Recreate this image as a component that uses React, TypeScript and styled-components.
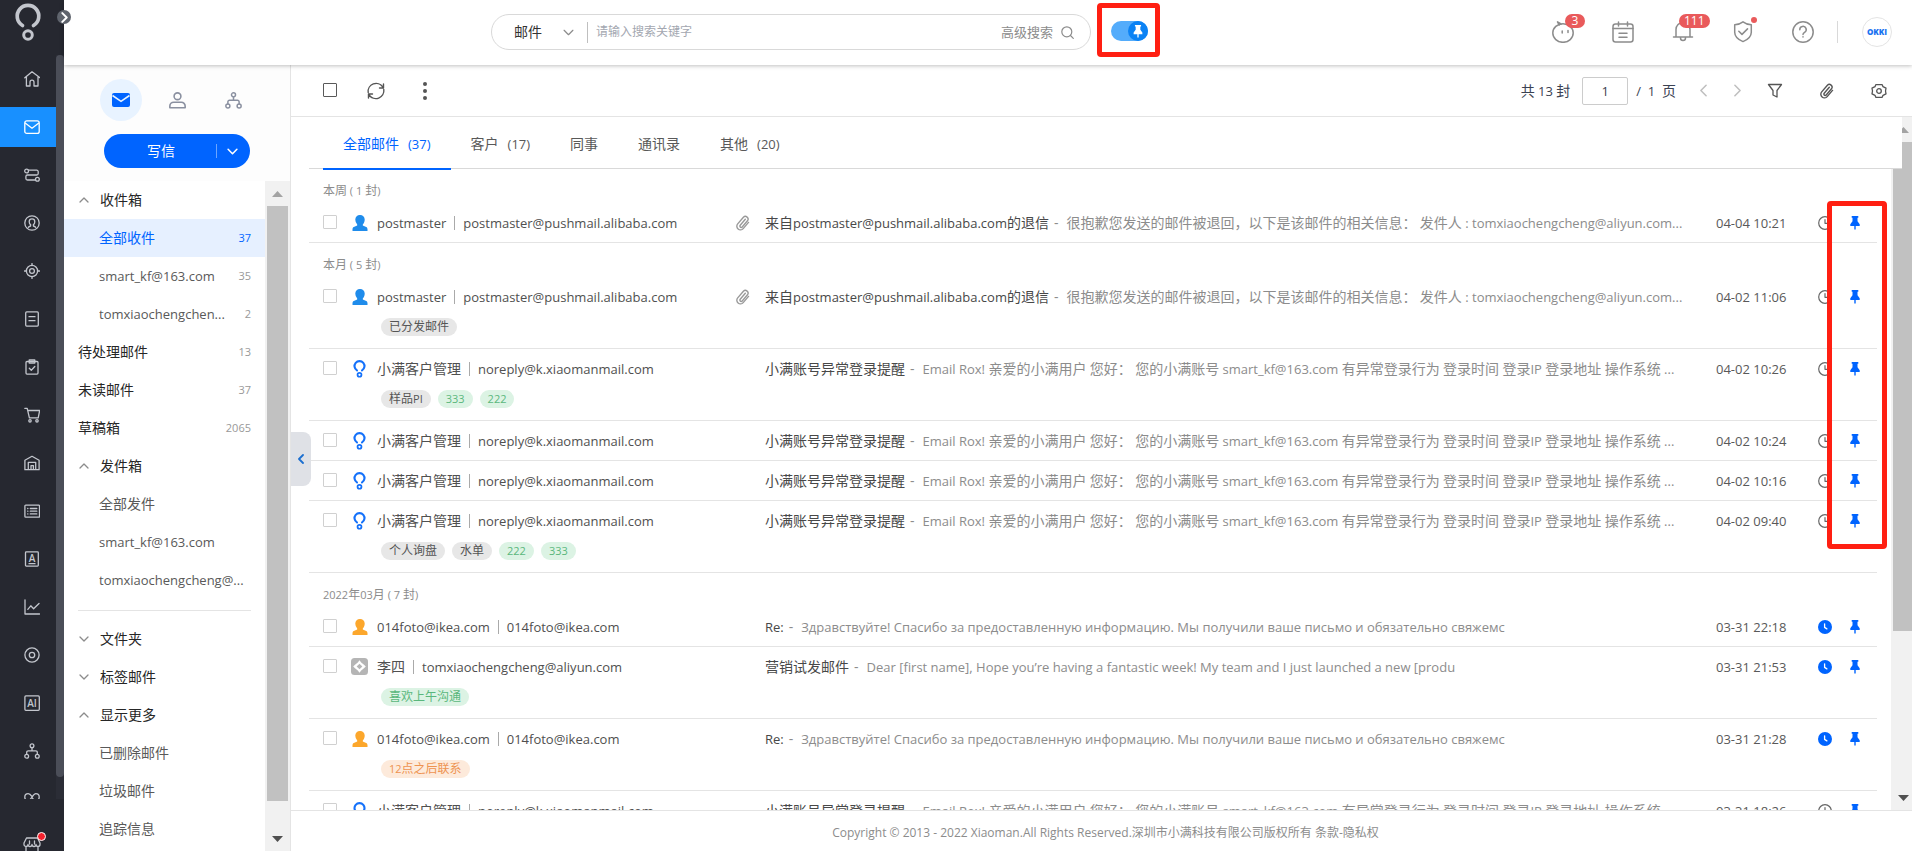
import React from "react";
import styled, { createGlobalStyle, css } from "styled-components";

const blue = "#0064ff";
const line = "#e4e4e4";

const GlobalStyle = createGlobalStyle`
  *, *::before, *::after { box-sizing: border-box; }
  body { margin: 0; background: #fff; }
  body, button, input, select {
    font-family: "Open Sans", "Noto Sans CJK SC", sans-serif;
    font-size: 14px;
    line-height: 20px;
    color: #505050;
  }
  button { padding: 0; border: 0; background: none; cursor: pointer; }
  ul { margin: 0; padding: 0; list-style: none; }
  a { color: inherit; text-decoration: none; }
  svg { display: block; flex: none; }
`;

/* ---------- text ---------- */

const Latin = styled.span<{ $size: number }>`
  font-size: ${(p) => p.$size}px;
`;

const CJK = /([\u2e80-\u9fff\uff00-\uffef]+)/;

/** Latin glyphs are set one pixel smaller than the Chinese ones beside them. */
function T({ children, size = 14 }: { children: string; size?: number }) {
  return (
    <>
      {children.split(CJK).map((part, i) =>
        i % 2 ? part : part && <Latin key={i} $size={size - 1}>{part}</Latin>
      )}
    </>
  );
}

/* ---------- icons ---------- */

type SvgProps = { w?: number; h?: number; box?: string; sw?: number; color?: string; children: React.ReactNode };

function Svg({ w = 16, h = w, box = "0 0 16 16", sw = 1.3, color = "currentColor", children }: SvgProps) {
  return (
    <svg width={w} height={h} viewBox={box} fill="none" stroke={color} strokeWidth={sw}
      strokeLinejoin="round" strokeLinecap="round" aria-hidden="true">
      {children}
    </svg>
  );
}

const BrandMark = ({ w, h, color, sw = 3.7 }: { w: number; h: number; color: string; sw?: number }) => (
  <Svg w={w} h={h} box="14 3 28 39" color={color} sw={sw}>
    <path d="M22.5 25.5A10.8 10.8 0 1 1 33.5 25.5" />
    <circle cx="28" cy="35" r="4.3" strokeWidth={sw * 0.8} />
  </Svg>
);

const Chevron = ({ dir, size = 10, sw = 1.3, color }: { dir: "up" | "down" | "left" | "right"; size?: number; sw?: number; color?: string }) => {
  const d = { up: "M1 7 5 3l4 4", down: "M1 3l4 4 4-4", left: "M7 1 3 5l4 4", right: "M3 1l4 4-4 4" }[dir];
  return <Svg w={size} box="0 0 10 10" sw={sw} color={color}><path d={d} /></Svg>;
};

const Pin = ({ w = 10, h = 14 }: { w?: number; h?: number }) => (
  <svg width={w} height={h} viewBox="0 0 10 14" fill="currentColor" aria-hidden="true">
    <path d="M1.7 0h6.6v1.7h-.8v3.5L9.7 8.200v1.700H5.700V13.500H4.300V9.900H.3V8.200L2.500 5.200V1.700h-.8z" />
  </svg>
);

const Clock = ({ filled }: { filled: boolean }) =>
  filled ? (
    <Svg w={14} box="0 0 14 14" color="#fff">
      <circle cx="7" cy="7" r="7" fill={blue} stroke="none" />
      <path d="M6.600 3.800v3.600l2.300 1.500" />
    </Svg>
  ) : (
    <Svg w={14} box="0 0 14 14" sw={1.2} color="#666">
      <circle cx="7" cy="7" r="6.300" />
      <path d="M7 3.500V7.300h3" />
    </Svg>
  );

const Clip = ({ size = 16, color = "#999" }: { size?: number; color?: string }) => (
  <Svg w={size} color={color} sw={1.4}>
    <path d="M10.300 4.300 5.200 10.300a1.300 1.300 0 0 0 2 1.700l5.300-6.200a2.700 2.700 0 0 0-4.100-3.500L2.700 8.900a3.600 3.600 0 0 0 5.500 4.700l5.300-6.200" />
  </Svg>
);

const Person = ({ color }: { color: string }) => (
  <svg width="16" height="16" viewBox="0 0 16 16" fill={color} aria-hidden="true">
    <path d="M8 0a4.600 4.600 0 0 1 4.700 4.700c0 1.900-.7 3.500-1.900 4.700v1l3.400 1.500c.8.400 1.200 1.200 1.300 2.200V16H.5v-1.900c.1-1 .5-1.800 1.300-2.200l3.400-1.500v-1A6.500 6.500 0 0 1 3.300 4.700 4.600 4.600 0 0 1 8 0z" />
  </svg>
);

const Lead = () => (
  <svg width="17" height="17" viewBox="0 0 17 17" aria-hidden="true">
    <rect width="17" height="17" rx="3.500" fill="#b5b5b5" />
    <path d="M8.500 2.200l1.700 2.300 2.500 1.900 2.100 2.100-2.100 2.100-2.500 1.900-1.700 2.300-1.700-2.300-2.500-1.900-2.100-2.100 2.100-2.100 2.500-1.900z" fill="#fff" />
    <path d="M8.500 5.700l2.800 2.800-2.800 2.800-2.800-2.800z" fill="#b5b5b5" />
  </svg>
);

const Mail = () => (
  <>
    <rect x=".8" y="1.800" width="14.400" height="12.600" rx="2" />
    <path d="M1.500 4.200 8 9.200l6.500-5" />
  </>
);

const Org = () => (
  <>
    <circle cx="8" cy="2.700" r="1.900" />
    <circle cx="2.700" cy="13.200" r="1.900" />
    <circle cx="13.300" cy="13.200" r="1.900" />
    <path d="M8 4.600v3.200M2.700 11.300V9.300a1.500 1.500 0 0 1 1.500-1.500h7.600a1.500 1.500 0 0 1 1.500 1.500v2" />
  </>
);

const GlyphText = styled.text`
  font: 600 10px "Open Sans", sans-serif;
  fill: currentColor;
  stroke: none;
`;

const navIcons: { label: string; icon: React.ReactNode; active?: boolean }[] = [
  { label: "首页", icon: <path d="M.8 6.800 8 .8l8 6M2.400 5.800v9.200h3.600v-3.800a2 2 0 0 1 4 0V15h4V5.800" /> },
  { label: "邮件", icon: <Mail />, active: true },
  { label: "流程", icon: <><circle cx="2.600" cy="4" r="1.900" /><circle cx="13.400" cy="12.200" r="1.900" /><path d="M4.400 3.200h8.300a1.500 1.500 0 0 1 1.500 1.500v1.800A1.500 1.500 0 0 1 12.700 8H3.400A1.500 1.500 0 0 0 1.900 9.500v2a1.500 1.500 0 0 0 1.500 1.500h8M5.500 8h5" /></> },
  { label: "客户", icon: <><circle cx="8" cy="8" r="7.200" /><path d="M4.300 12.400c.5-.9 1.300-1.200 2.300-1.400V9.600C5.700 9 5.200 8 5.200 6.700a2.800 2.800 0 0 1 5.600 0c0 1.300-.5 2.300-1.400 2.900V11c1 .2 1.800.5 2.300 1.400" /></> },
  { label: "线索", icon: <><circle cx="8" cy="8" r="5.600" /><circle cx="8" cy="8" r="2.400" /><path d="M8 .5v2M8 13.500v2M.5 8h2M13.500 8h2" /></> },
  { label: "文档", icon: <><rect x="1.700" y=".9" width="12.600" height="14.200" rx="1" /><path d="M5 5.700h6M5 9.700h6" /></> },
  { label: "任务", icon: <><rect x="2" y="2.500" width="12" height="12.600" rx="1" /><path d="M5.200 1h5.600v3H5.200zM5.300 9.200l2 2 3.500-3.700" /></> },
  { label: "订单", icon: <><path d="M.8 1.300h2.400l2.200 9.600h8.800l1.500-7.400H3.700" /><circle cx="6" cy="13.800" r="1.200" /><circle cx="13" cy="13.800" r="1.200" /></> },
  { label: "仓库", icon: <><path d="M.9 5.200 8 1.300l7.100 3.900v9.500H.9zM4.300 14.500V7.300h7.400v7.200M7 14.500v-3.800h2.400v3.800" /></> },
  { label: "列表", icon: <><rect x=".9" y="2.200" width="14.600" height="12" rx=".8" /><path d="M3.700 5.500h.2M3.700 8.200h.2M3.700 10.900h.2M6.300 5.500h6.500M6.300 8.200h6.500M6.300 10.900h6.500" /></> },
  { label: "翻译", icon: <><rect x="1.500" y=".9" width="12.800" height="14.200" rx=".8" /><GlyphText x="8" y="10.500" textAnchor="middle">A</GlyphText><path d="M5 12.700h6" /></> },
  { label: "报表", icon: <path d="M1 .8v14.200h14.600M3.800 10.300l3-3.500 2.800 3L15 4.500" /> },
  { label: "设置", icon: <><circle cx="8" cy="8" r="7.100" /><circle cx="8" cy="8" r="2.700" /></> },
  { label: "智能", icon: <><rect x=".9" y=".9" width="14.400" height="14.400" rx="1" /><GlyphText x="8" y="11.800" textAnchor="middle">AI</GlyphText></> },
  { label: "组织", icon: <Org /> },
  { label: "更多", icon: <path d="M8 5.500C6.500 3.500 5.500 2.700 4.200 2.700a3.400 3.400 0 0 0 0 6.800c3 0 4.600-6.800 7.600-6.800a3.400 3.400 0 0 1 0 6.800c-1.500 0-2.500-1-3.800-3" /> },
];

/* ---------- shell ---------- */

const Shell = styled.div`
  position: relative;
  display: flex;
  height: 100vh;
  overflow: hidden;
`;

const Rail = styled.aside`
  position: relative;
  display: flex;
  flex: none;
  flex-direction: column;
  width: 64px;
  background: #262830;
  color: #c3c6cd;
`;

const RailLogo = styled.a`
  display: block;
  height: 55px;
  padding: 3px 0 0 14px;
`;

const ExpandButton = styled.button`
  position: absolute;
  z-index: 5;
  top: 10px;
  left: 57px;
  display: grid;
  place-items: center;
  width: 14px;
  height: 14px;
  border-radius: 50%;
  background: #5f646d;
`;

const RailBody = styled.div`
  display: flex;
  flex: 1;
  min-height: 0;
`;

const RailNav = styled.nav`
  display: flex;
  flex: 1;
  flex-direction: column;
  gap: 8px;
  padding-top: 4px;
  overflow: hidden;
`;

const RailLink = styled.a<{ $active?: boolean }>`
  display: flex;
  flex: none;
  align-items: center;
  height: 40px;
  padding-left: 24px;
  background: ${(p) => (p.$active ? "#1890ff" : "none")};
  color: ${(p) => (p.$active ? "#fff" : "inherit")};
`;

const RailTrack = styled.div`
  width: 8px;
  background: #2b2d36;
`;

const RailThumb = styled.div`
  height: 97%;
  border-radius: 4px;
  background: #4b4e58;
`;

const RailStore = styled.a`
  position: relative;
  display: block;
  height: 52px;
  padding: 38px 0 0 23px;
  overflow: hidden;
`;

const StoreDot = styled.i`
  position: absolute;
  top: 33px;
  left: 37px;
  width: 9px;
  height: 9px;
  border: 1px solid #fff;
  border-radius: 50%;
  background: #f5222d;
`;

const Page = styled.div`
  display: flex;
  flex: 1;
  flex-direction: column;
  min-width: 0;
`;

/* ---------- header ---------- */

const Header = styled.header`
  position: relative;
  z-index: 2;
  display: flex;
  flex: none;
  align-items: center;
  height: 65px;
  padding: 0 20px 13px 427px;
  background: #fff;
  box-shadow: 0 1px 4px rgba(0, 0, 0, 0.25);
`;

const SearchBox = styled.form`
  display: flex;
  align-items: center;
  width: 600px;
  height: 36px;
  margin-top: 12px;
  padding: 0 16px 0 22px;
  border: 1px solid #d9d9d9;
  border-radius: 18px;
  color: #8c8c8c;
`;

const ScopeSelect = styled.select`
  width: 49px;
  border: 0;
  outline: 0;
  background: none;
  appearance: none;
  color: #333;
`;

const SearchDivider = styled.i`
  width: 1px;
  height: 21px;
  margin: 0 8px 0 13px;
  background: #bfbfbf;
`;

const SearchInput = styled.input`
  flex: 1;
  min-width: 0;
  padding: 0;
  border: 0;
  outline: 0;
  background: none;
  font-size: 12px;
  &::placeholder { color: #a3a7b0; }
`;

const AdvancedButton = styled.button`
  margin-right: 8px;
  color: #8c8c8c;
  font-size: 13px;
`;

const Highlight = styled.div`
  display: grid;
  place-items: center;
  width: 63px;
  height: 54px;
  margin: 8px 0 0 6px;
  padding: 2px 0 0 2px;
  border: 5px solid #ff1f12;
  border-radius: 4px;
`;

const PinSwitch = styled.label`
  position: relative;
  display: flex;
  justify-content: flex-end;
  width: 37px;
  height: 20px;
  border-radius: 10px;
  background: #54acfb;
`;

const HiddenCheck = styled.input`
  position: absolute;
  inset: 0;
  margin: 0;
  opacity: 0;
`;

const SwitchKnob = styled.span`
  display: grid;
  place-items: center;
  width: 20px;
  height: 20px;
  border-radius: 50%;
  background: #0b82f4;
  color: #fff;
`;

const HeaderTools = styled.div`
  display: flex;
  align-items: center;
  gap: 38px;
  margin: 12px 0 0 auto;
  color: #8c8c8c;
`;

const ToolButton = styled.button`
  position: relative;
  color: inherit;
`;

const Badge = styled.span`
  position: absolute;
  top: -7px;
  left: 13px;
  min-width: 20px;
  height: 14px;
  padding: 0 6px;
  border-radius: 7px;
  background: #e95a5b;
  color: #fff;
  font-size: 12px;
  line-height: 14px;
`;

const WideBadge = styled(Badge)`
  left: 7px;
  padding: 0 5px;
`;

const BadgeDot = styled.i`
  position: absolute;
  top: -4px;
  right: -3px;
  width: 6px;
  height: 6px;
  border-radius: 50%;
  background: #e95a5b;
`;

const Account = styled.div`
  display: flex;
  align-items: center;
  gap: 24px;
  margin: 12px 0 0 23px;
  &::before {
    content: "";
    width: 1px;
    height: 22px;
    background: #d9d9d9;
  }
`;

const Avatar = styled.button`
  width: 30px;
  height: 30px;
  border: 1px solid #e4e4e4;
  border-radius: 50%;
  color: #1a73f0;
  font-size: 8px;
  font-weight: 800;
  line-height: 28px;
`;

/* ---------- folders ---------- */

const Body = styled.div`
  display: flex;
  flex: 1;
  min-height: 0;
`;

const Side = styled.aside`
  display: flex;
  flex: none;
  flex-direction: column;
  width: 227px;
  border-right: 1px solid ${line};
`;

const SideTop = styled.div`
  flex: none;
  height: 116px;
  padding-top: 14px;
  background: #fdfdfd;
`;

const ModeBar = styled.div`
  display: flex;
  gap: 14px;
  padding-left: 36px;
`;

const ModeButton = styled.button<{ $active?: boolean }>`
  display: grid;
  place-items: center;
  width: 42px;
  height: 42px;
  border-radius: 50%;
  background: ${(p) => (p.$active ? "#e8f3ff" : "none")};
  color: #8a90a0;
`;

const Compose = styled.div`
  display: flex;
  align-items: center;
  width: 146px;
  height: 34px;
  margin: 13px 0 0 40px;
  border-radius: 17px;
  background: ${blue};
`;

const ComposeMain = styled.button`
  flex: 1;
  height: 34px;
  padding-left: 2px;
  color: #fff;
`;

const ComposeMore = styled.button`
  display: flex;
  align-items: center;
  width: 34px;
  height: 14px;
  padding-left: 10px;
  border-left: 1px solid #6ba5ff;
`;

const SideBody = styled.div`
  display: flex;
  flex: 1;
  min-height: 0;
`;

const Folders = styled.nav`
  flex: 1;
  min-width: 0;
  overflow: hidden;
`;

const Folder = styled.a<{ $level: "group" | "plain" | "child"; $active?: boolean }>`
  display: flex;
  align-items: center;
  height: 38px;
  padding: 0 14px;
  color: #595959;
  ${(p) => p.$level === "child" && css`padding-left: 35px;`}
  ${(p) => p.$level !== "child" && css`color: #262626;`}
  ${(p) => p.$active && css`background: #e6f0ff; color: ${blue};`}
`;

const FolderToggle = styled.span`
  width: 22px;
  padding-left: 1px;
  color: #8c8c8c;
`;

const FolderName = styled.span`
  flex: 1;
  overflow: hidden;
  text-overflow: ellipsis;
  white-space: nowrap;
`;

const FolderCount = styled.span<{ $active?: boolean }>`
  color: ${(p) => (p.$active ? blue : "#999")};
  font-size: 11px;
`;

const FolderRule = styled.hr`
  height: 1px;
  margin: 11px 14px 9px;
  border: 0;
  background: ${line};
`;

const Track = styled.div<{ $width: number }>`
  display: flex;
  flex: none;
  flex-direction: column;
  width: ${(p) => p.$width}px;
  background: #f1f1f1;
`;

const TrackArrow = styled.span`
  display: grid;
  flex: none;
  place-items: center;
  width: 25px;
  height: 25px;
`;

const TrackRun = styled.div`
  flex: 1;
  padding-left: 2px;
`;

const TrackThumb = styled.div<{ $share: number }>`
  width: 21px;
  max-width: 100%;
  height: ${(p) => p.$share}%;
  background: #c1c1c1;
`;

function ScrollTrack({ share, width }: { share: number; width: number }) {
  return (
    <Track $width={width} aria-hidden="true">
      <TrackArrow><svg width="11" height="6" viewBox="0 0 11 6"><path d="M0 6 5.500 0 11 6z" fill="#a3a3a3" /></svg></TrackArrow>
      <TrackRun><TrackThumb $share={share} /></TrackRun>
      <TrackArrow><svg width="11" height="6" viewBox="0 0 11 6"><path d="M0 0 5.500 6 11 0z" fill="#505050" /></svg></TrackArrow>
    </Track>
  );
}

/* ---------- mail area ---------- */

const Main = styled.main`
  position: relative;
  display: flex;
  flex: 1;
  flex-direction: column;
  min-width: 0;
`;

const CollapseHandle = styled.button`
  position: absolute;
  top: 367px;
  left: 0;
  display: grid;
  place-items: center;
  width: 20px;
  height: 54px;
  border-radius: 0 8px 8px 0;
  background: #dfe1e6;
`;

const Toolbar = styled.div`
  display: flex;
  flex: none;
  align-items: center;
  height: 52px;
  padding: 0 25px 0 32px;
  border-bottom: 1px solid ${line};
  color: #555;
`;

const Check = styled.input<{ $dark?: boolean }>`
  flex: none;
  width: 14px;
  height: 14px;
  margin: 0 0 2px;
  border: 1px solid ${(p) => (p.$dark ? "#595959" : "#d0d0d0")};
  border-radius: 1px;
  background: #fff;
  appearance: none;
`;

const BarActions = styled.div`
  display: flex;
  align-items: center;
  gap: 30px;
`;

const Pager = styled.div`
  display: flex;
  align-items: center;
  margin-left: auto;
  padding-right: 23px;
  color: #3b4252;
`;

const PageInput = styled.input`
  width: 46px;
  height: 28px;
  margin: 0 8px 0 12px;
  border: 1px solid #ccc;
  border-radius: 2px;
  font-size: 13px;
  text-align: center;
  color: #3b4252;
`;

const Step = styled.button`
  margin-left: 21px;
`;

const RightActions = styled.div`
  display: flex;
  align-items: center;
  gap: 36px;
`;

const Viewport = styled.div`
  position: relative;
  display: flex;
  flex: 1;
  min-height: 0;
`;

const Content = styled.div`
  flex: 1;
  min-width: 0;
  padding-left: 18px;
  overflow: hidden;
`;

const TabBar = styled.div`
  position: absolute;
  z-index: 1;
  top: 0;
  right: 10px;
  left: 0;
  padding-left: 18px;
  background: #fff;
`;

const TabStrip = styled.div`
  display: flex;
  height: 52px;
  padding-left: 14px;
  border-bottom: 1px solid #d9d9d9;
`;

const Tab = styled.button<{ $active?: boolean }>`
  display: flex;
  gap: 9px;
  align-items: center;
  height: 53px;
  padding: 2px 20px 0;
  border-bottom: 2px solid ${(p) => (p.$active ? blue : "transparent")};
  color: ${(p) => (p.$active ? blue : "#595959")};
`;

const Mails = styled.div`
  margin-right: 14px;
  padding-top: 52px;
`;

const GroupTitle = styled.h2`
  height: 34px;
  margin: 0;
  padding: 14px 14px 4px;
  color: #8c8c8c;
  font-size: 12px;
  font-weight: 400;
  line-height: 16px;
`;

const MailItem = styled.li`
  padding-left: 14px;
  border-bottom: 1px solid ${line};
`;

const MailLine = styled.div`
  display: flex;
  align-items: center;
  height: 39px;
`;

const Kind = styled.span`
  display: grid;
  place-items: center;
  width: 17px;
  margin: 0 9px 0 14px;
`;

const Sender = styled.span`
  display: flex;
  align-items: center;
  width: 358px;
  white-space: nowrap;
`;

const SenderRule = styled.i`
  width: 1px;
  height: 14px;
  margin: 0 8px;
  background: #aaa;
`;

const ClipSlot = styled.span`
  width: 30px;
`;

const Summary = styled.span`
  flex: 1;
  min-width: 0;
  padding-right: 8px;
  overflow: hidden;
  color: #8c8c8c;
  text-overflow: ellipsis;
  white-space: nowrap;
`;

const Subject = styled.a`
  color: #484848;
`;

const Dash = styled.span`
  margin: 0 8px 0 5px;
`;

const When = styled.time`
  width: 102px;
  color: #595959;
  font-size: 13px;
`;

const PinButton = styled.button`
  margin: 0 17px 0 18px;
  color: ${blue};
`;

const Tags = styled.div`
  display: flex;
  gap: 7px;
  height: 32px;
  padding: 2px 0 0 58px;
`;

const tones = {
  gray: css`background: #e7e7e7; color: #555;`,
  green: css`background: #dcf3e4; color: #5ab77c;`,
  orange: css`background: #fdeadb; color: #ee9350;`,
};

const Tag = styled.span<{ $tone: keyof typeof tones }>`
  height: 18px;
  padding: 0 8px;
  border-radius: 9px;
  font-size: 12px;
  line-height: 18px;
  ${(p) => tones[p.$tone]}
`;

const PinFrame = styled.div`
  position: absolute;
  z-index: 2;
  top: 84px;
  right: 25px;
  width: 60px;
  height: 348px;
  border: 5px solid #ff1f12;
  border-radius: 4px;
  pointer-events: none;
`;

const Footer = styled.footer`
  flex: none;
  height: 41px;
  padding: 12px 0 0 8px;
  border-top: 1px solid ${line};
  color: #8c8c8c;
  font-size: 12px;
  text-align: center;
`;

/* ---------- data ---------- */

type MailData = {
  kind: "blue" | "orange" | "brand" | "lead";
  name: string;
  address: string;
  clip?: boolean;
  subject: string;
  text: string;
  time: string;
  scheduled?: boolean;
  tags?: [string, keyof typeof tones][];
};

const bounce = {
  kind: "blue" as const,
  name: "postmaster",
  address: "postmaster@pushmail.alibaba.com",
  clip: true,
  subject: "来自postmaster@pushmail.alibaba.com的退信",
  text: "很抱歉您发送的邮件被退回，以下是该邮件的相关信息： 发件人 : tomxiaochengcheng@aliyun.com...",
};
const alertMail = {
  kind: "brand" as const,
  name: "小满客户管理",
  address: "noreply@k.xiaomanmail.com",
  subject: "小满账号异常登录提醒",
  text: "Email Rox! 亲爱的小满用户 您好： 您的小满账号 smart_kf@163.com 有异常登录行为 登录时间 登录IP 登录地址 操作系统 ...",
};
const ikea = {
  kind: "orange" as const,
  name: "014foto@ikea.com",
  address: "014foto@ikea.com",
  subject: "Re:",
  text: "Здравствуйте! Спасибо за предоставленную информацию. Мы получили ваше письмо и обязательно свяжемс",
  scheduled: true,
};

const groups: { title: string; mails: MailData[] }[] = [
  { title: "本周 ( 1 封)", mails: [{ ...bounce, time: "04-04 10:21" }] },
  {
    title: "本月 ( 5 封)",
    mails: [
      { ...bounce, time: "04-02 11:06", tags: [["已分发邮件", "gray"]] },
      { ...alertMail, time: "04-02 10:26", tags: [["样品PI", "gray"], ["333", "green"], ["222", "green"]] },
      { ...alertMail, time: "04-02 10:24" },
      { ...alertMail, time: "04-02 10:16" },
      { ...alertMail, time: "04-02 09:40", tags: [["个人询盘", "gray"], ["水单", "gray"], ["222", "green"], ["333", "green"]] },
    ],
  },
  {
    title: "2022年03月 ( 7 封)",
    mails: [
      { ...ikea, time: "03-31 22:18" },
      {
        kind: "lead", name: "李四", address: "tomxiaochengcheng@aliyun.com", subject: "营销试发邮件",
        text: "Dear [first name], Hope you’re having a fantastic week! My team and I just launched a new [produ",
        time: "03-31 21:53", scheduled: true, tags: [["喜欢上午沟通", "green"]],
      },
      { ...ikea, time: "03-31 21:28", tags: [["12点之后联系", "orange"]] },
      { ...alertMail, time: "03-31 18:26" },
    ],
  },
];

type FolderData = { name: string; level: "group" | "plain" | "child"; open?: boolean; count?: string; active?: boolean };

const folders: FolderData[] = [
  { name: "收件箱", level: "group", open: true },
  { name: "全部收件", level: "child", count: "37", active: true },
  { name: "smart_kf@163.com", level: "child", count: "35" },
  { name: "tomxiaochengchen...", level: "child", count: "2" },
  { name: "待处理邮件", level: "plain", count: "13" },
  { name: "未读邮件", level: "plain", count: "37" },
  { name: "草稿箱", level: "plain", count: "2065" },
  { name: "发件箱", level: "group", open: true },
  { name: "全部发件", level: "child" },
  { name: "smart_kf@163.com", level: "child" },
  { name: "tomxiaochengcheng@...", level: "child" },
];
const moreFolders: FolderData[] = [
  { name: "文件夹", level: "group" },
  { name: "标签邮件", level: "group" },
  { name: "显示更多", level: "group", open: true },
  { name: "已删除邮件", level: "child" },
  { name: "垃圾邮件", level: "child" },
  { name: "追踪信息", level: "child" },
];

const tabs: [string, string?][] = [["全部邮件", "(37)"], ["客户", "(17)"], ["同事"], ["通讯录"], ["其他", "(20)"]];

/* ---------- parts ---------- */

const FolderItem = ({ name, level, open, count, active }: FolderData) => (
  <Folder href="#" $level={level} $active={active}>
    {level === "group" && <FolderToggle><Chevron dir={open ? "up" : "down"} /></FolderToggle>}
    <FolderName><T>{name}</T></FolderName>
    {count && <FolderCount $active={active}>{count}</FolderCount>}
  </Folder>
);

const kindIcons = {
  blue: <Person color="#1f8ceb" />,
  orange: <Person color="#fca72c" />,
  brand: <BrandMark w={13} h={18} color="#1471fa" sw={4.6} />,
  lead: <Lead />,
};

const MailRow = ({ mail }: { mail: MailData }) => (
  <MailItem>
    <MailLine>
      <Check type="checkbox" aria-label={`选择 ${mail.subject}`} />
      <Kind>{kindIcons[mail.kind]}</Kind>
      <Sender>
        <span><T>{mail.name}</T></span>
        <SenderRule />
        <span><T>{mail.address}</T></span>
      </Sender>
      <ClipSlot>{mail.clip && <Clip />}</ClipSlot>
      <Summary>
        <Subject href="#"><T>{mail.subject}</T></Subject>
        <Dash>-</Dash>
        <T>{mail.text}</T>
      </Summary>
      <When>{mail.time}</When>
      <ToolButton type="button" aria-label="定时"><Clock filled={!!mail.scheduled} /></ToolButton>
      <PinButton type="button" aria-label="固定"><Pin /></PinButton>
    </MailLine>
    {mail.tags && (
      <Tags>
        {mail.tags.map(([name, tone]) => <Tag key={name} $tone={tone}><T size={12}>{name}</T></Tag>)}
      </Tags>
    )}
  </MailItem>
);

export default function App() {
  return (
    <Shell>
      <GlobalStyle />
      <Rail>
        <RailLogo href="#" aria-label="OKKI"><BrandMark w={28} h={39} color="#c3c6cd" /></RailLogo>
        <ExpandButton type="button" aria-label="展开"><Chevron dir="right" size={11} sw={1.8} color="#fff" /></ExpandButton>
        <RailBody>
          <RailNav>
            {navIcons.map((n) => (
              <RailLink key={n.label} href="#" aria-label={n.label} $active={n.active}><Svg>{n.icon}</Svg></RailLink>
            ))}
          </RailNav>
          <RailTrack><RailThumb /></RailTrack>
        </RailBody>
        <RailStore href="#" aria-label="商店">
          <Svg w={18} box="0 0 18 18">
            <path d="M3.500 1h11l2.500 5v1.500a2 2 0 0 1-4 0 2 2 0 0 1-4 0 2 2 0 0 1-4 0 2 2 0 0 1-4 0V6zM6.500 4v3M11.500 4v3M3 9.500V17h12V9.500" />
          </Svg>
          <StoreDot />
        </RailStore>
      </Rail>

      <Page>
        <Header>
          <SearchBox>
            <ScopeSelect aria-label="范围" defaultValue="mail"><option value="mail">邮件</option></ScopeSelect>
            <Chevron dir="down" size={11} sw={1.1} />
            <SearchDivider />
            <SearchInput type="text" placeholder="请输入搜索关键字" aria-label="搜索" />
            <AdvancedButton type="button">高级搜索</AdvancedButton>
            <Svg w={13} box="0 0 13 13" sw={1.2}><circle cx="5.800" cy="5.800" r="5" /><path d="M9.500 9.500l2.800 2.800" /></Svg>
          </SearchBox>
          <Highlight>
            <PinSwitch>
              <HiddenCheck type="checkbox" defaultChecked aria-label="固定模式" />
              <SwitchKnob><Pin w={10} h={13} /></SwitchKnob>
            </PinSwitch>
          </Highlight>
          <HeaderTools>
            <ToolButton type="button" aria-label="助手">
              <Svg w={22} box="0 0 22 22" sw={1.5}>
                <ellipse cx="11" cy="12" rx="10.200" ry="9.300" />
                <path d="M9 3 5.500.8l1.700 3.200M10.200 10v2M16 9.500v2" />
              </Svg>
              <Badge>3</Badge>
            </ToolButton>
            <ToolButton type="button" aria-label="日程">
              <Svg w={22} box="0 0 22 22" sw={1.5}>
                <rect x="1" y="3" width="20" height="18" rx="2.500" />
                <path d="M1 7.500h20M6.500 1v4M15.500 1v4M7 12.200h8M7 16.200h8" />
              </Svg>
            </ToolButton>
            <ToolButton type="button" aria-label="通知">
              <Svg w={22} box="0 0 22 22" sw={1.5}>
                <path d="M1.500 16h19M4 16V8.500a7 7 0 0 1 14 0V16M8.500 17a2.500 2.500 0 0 0 5 0" />
              </Svg>
              <WideBadge>111</WideBadge>
            </ToolButton>
            <ToolButton type="button" aria-label="安全">
              <Svg w={22} box="0 0 22 22" sw={1.5}>
                <path d="M11 .8c2.500 1.900 5 2.800 8.300 3v7.400c0 4.500-3 7.200-8.300 9.400-5.300-2.200-8.300-4.900-8.300-9.400V3.800c3.300-.2 5.800-1.100 8.300-3zM6.800 10.200l3.200 3.200 5.500-5.500" />
              </Svg>
              <BadgeDot />
            </ToolButton>
            <ToolButton type="button" aria-label="帮助">
              <Svg w={22} box="0 0 22 22" sw={1.5}>
                <circle cx="11" cy="11" r="10.200" />
                <path d="M7.800 8.700A3.200 3.200 0 1 1 12.600 11.300c-1.100.7-1.600 1.100-1.600 2.200M11 15.700v.3" />
              </Svg>
            </ToolButton>
          </HeaderTools>
          <Account><Avatar type="button">OKKI</Avatar></Account>
        </Header>

        <Body>
          <Side>
            <SideTop>
              <ModeBar>
                <ModeButton type="button" $active aria-label="邮件">
                  <svg width="18" height="14" viewBox="0 0 18 14" aria-hidden="true">
                    <rect width="18" height="14" rx="2" fill={blue} />
                    <path d="M.5 2.500 9 8.300l8.500-5.800" fill="none" stroke="#e8f3ff" strokeWidth="1.600" />
                  </svg>
                </ModeButton>
                <ModeButton type="button" aria-label="联系人">
                  <Svg w={17} box="0 0 16 16" sw={1.5}>
                    <circle cx="8" cy="4" r="3.200" />
                    <path d="M.8 14.800v-1.600a3.600 3.600 0 0 1 3.600-3.600h7.200a3.600 3.600 0 0 1 3.600 3.600v1.600z" />
                  </Svg>
                </ModeButton>
                <ModeButton type="button" aria-label="组织"><Svg w={17} sw={1.4}><Org /></Svg></ModeButton>
              </ModeBar>
              <Compose>
                <ComposeMain type="button">写信</ComposeMain>
                <ComposeMore type="button" aria-label="更多写信方式"><Chevron dir="down" size={11} sw={1.4} color="#fff" /></ComposeMore>
              </Compose>
            </SideTop>
            <SideBody>
              <Folders>
                {folders.map((f, i) => <FolderItem key={i} {...f} />)}
                <FolderRule />
                {moreFolders.map((f) => <FolderItem key={f.name} {...f} />)}
              </Folders>
              <ScrollTrack share={96} width={25} />
            </SideBody>
          </Side>

          <Main>
            <Toolbar>
              <BarActions>
                <Check type="checkbox" $dark aria-label="全选" />
                <ToolButton type="button" aria-label="刷新">
                  <Svg w={18} box="0 0 18 18" sw={1.4}>
                    <path d="M1.200 10.500A8 8 0 0 1 15.800 5M16.500 2v4h-4M16.800 7.500A8 8 0 0 1 2.200 13M1.500 16v-4h4" />
                  </Svg>
                </ToolButton>
                <ToolButton type="button" aria-label="更多">
                  <svg width="20" height="20" viewBox="0 0 20 20" fill="currentColor" aria-hidden="true">
                    <circle cx="10" cy="3" r="2" /><circle cx="10" cy="10" r="2" /><circle cx="10" cy="17" r="2" />
                  </svg>
                </ToolButton>
              </BarActions>
              <Pager>
                <span><T>共 13 封</T></span>
                <PageInput type="text" defaultValue="1" aria-label="页码" />
                <span><T>{"/\u00a0 1 \u00a0页"}</T></span>
                <Step type="button" aria-label="上一页"><Chevron dir="left" size={13} sw={1.2} color="#bfbfbf" /></Step>
                <Step type="button" aria-label="下一页"><Chevron dir="right" size={13} sw={1.2} color="#bfbfbf" /></Step>
              </Pager>
              <RightActions>
                <ToolButton type="button" aria-label="筛选">
                  <Svg><path d="M1.500 1.500h13L10 7.500V14l-4-2V7.500z" /></Svg>
                </ToolButton>
                <ToolButton type="button" aria-label="附件"><Clip color="#555" /></ToolButton>
                <ToolButton type="button" aria-label="设置">
                  <Svg><path d="M4.800 1.700h6.400l.8 2 3 1.500-.5 2.800.5 2.800-3 1.500-.8 2H4.800l-.8-2-3-1.500L1.500 8 1 5.200l3-1.500z" /><circle cx="8" cy="8" r="2.300" /></Svg>
                </ToolButton>
              </RightActions>
            </Toolbar>

            <Viewport>
              <Content>
                <TabBar>
                  <TabStrip role="tablist">
                    {tabs.map(([name, count], i) => (
                      <Tab key={name} type="button" role="tab" aria-selected={i === 0} $active={i === 0}>
                        <span>{name}</span>
                        {count && <Latin $size={13}>{count}</Latin>}
                      </Tab>
                    ))}
                  </TabStrip>
                </TabBar>
                <Mails>
                  {groups.map((g) => (
                    <section key={g.title}>
                      <GroupTitle><T size={12}>{g.title}</T></GroupTitle>
                      <ul>{g.mails.map((m) => <MailRow key={m.time} mail={m} />)}</ul>
                    </section>
                  ))}
                </Mails>
              </Content>
              <ScrollTrack share={76} width={21} />
              <PinFrame />
            </Viewport>

            <Footer>
              Copyright © 2013 - 2022 Xiaoman.All Rights Reserved.深圳市小满科技有限公司版权所有 条款-隐私权
            </Footer>
            <CollapseHandle type="button" aria-label="收起"><Chevron dir="left" size={10} sw={1.8} color="#1c6fd0" /></CollapseHandle>
          </Main>
        </Body>
      </Page>
    </Shell>
  );
}
